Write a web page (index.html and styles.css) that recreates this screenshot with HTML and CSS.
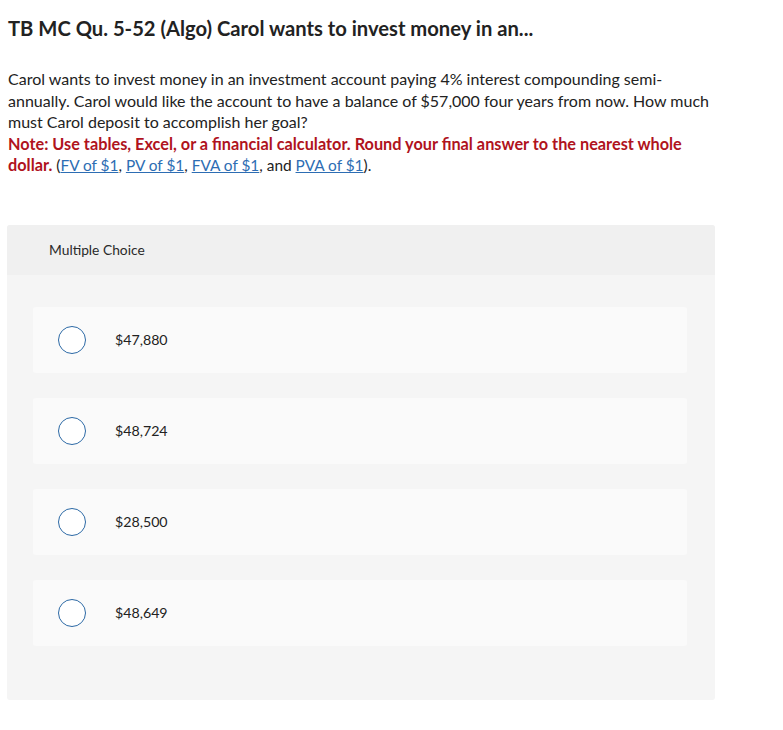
FILE: index.html
```html
<!DOCTYPE html>
<html lang="en">
  <head>
    <meta charset="UTF-8" />
    <title>TB MC Qu. 5-52 (Algo)</title>
    <link rel="stylesheet" href="styles.css">
  </head>
  <body>
    <h1 class="question-title">TB MC Qu. 5-52 (Algo) Carol wants to invest money in an...</h1>
    <p class="prompt">
      Carol wants to invest money in an investment account paying 4% interest compounding semi-annually.
      Carol would like the account to have a balance of $57,000 four years from now. How much
      must Carol deposit to accomplish her goal?<br />
      <strong class="note">Note: Use tables, Excel, or a financial calculator. Round your final answer to the nearest whole dollar.</strong>
      <span class="refs">(<a href="#">FV of $1</a>, <a href="#">PV of $1</a>, <a href="#">FVA of $1</a>, and <a href="#">PVA of $1</a>).</span>
    </p>

    <div class="choice-panel">
      <div class="choice-header">Multiple Choice</div>
      <div class="choice-list">
        <label class="choice">
          <span class="radio"></span>
          <span class="choice-text">$47,880</span>
        </label>
        <label class="choice">
          <span class="radio"></span>
          <span class="choice-text">$48,724</span>
        </label>
        <label class="choice">
          <span class="radio"></span>
          <span class="choice-text">$28,500</span>
        </label>
        <label class="choice">
          <span class="radio"></span>
          <span class="choice-text">$48,649</span>
        </label>
      </div>
    </div>
  </body>
</html>
```

FILE: styles.css
```css
body {
  margin: 0;
  padding: 0 8px;
  background-color: white;
  color: #222;
  font-family: Lato, "Open Sans", sans-serif;
}
.question-title {
  font-size: 20.2px;
  font-weight: 700;
  margin: 16px 0 0 0;
  line-height: 24px;
}
.prompt {
  font-size: 16px;
  line-height: 21.6px;
  margin: 28px 0 0 0;
  width: 710px;
}
.note {
  color: #b0131d;
  font-size: 16.3px;
}
.refs {
  font-size: 15.4px;
}
.prompt a {
  color: #2d6db3;
}
.choice-panel {
  margin: 48px 0 0 -1px;
  width: 708px;
  background-color: #f5f5f5;
  border-radius: 3px;
  padding-bottom: 54px;
}
.choice-header {
  background-color: #f0f0f0;
  height: 50px;
  display: flex;
  align-items: center;
  padding-left: 42px;
  font-size: 13.8px;
  color: #2a2a2a;
  border-radius: 3px 3px 0 0;
}
.choice-list {
  display: flex;
  flex-direction: column;
  gap: 25px;
  padding: 32px 28px 0 26px;
}
.choice {
  display: flex;
  align-items: center;
  height: 66px;
  background-color: #fafafa;
  border-radius: 3px;
  padding-left: 25px;
  font-size: 14.2px;
  cursor: pointer;
}
.radio {
  width: 26px;
  height: 26px;
  border: 1.3px solid #2c69a5;
  border-radius: 50%;
  background-color: white;
  margin-right: 29px;
}
```
